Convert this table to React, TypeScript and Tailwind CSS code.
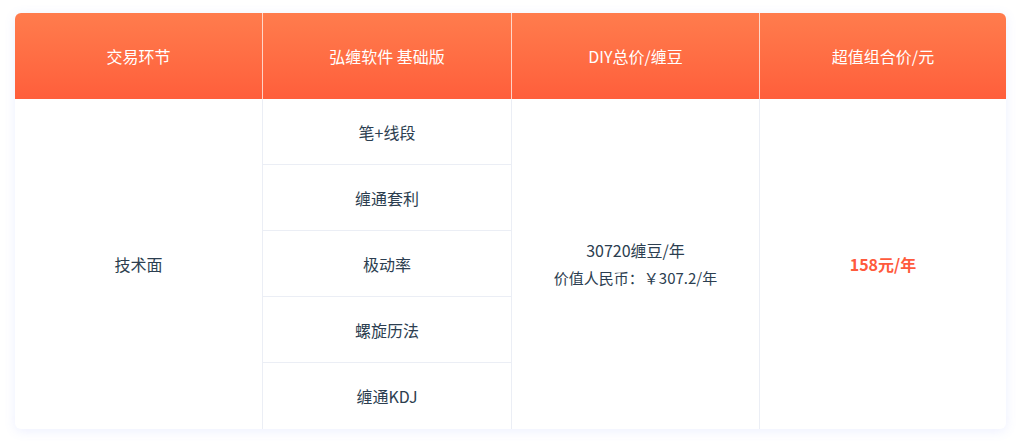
import React from "react";

const items = ["笔+线段", "缠通套利", "极动率", "螺旋历法", "缠通KDJ"];

export default function App() {
  return (
    <div
      className="w-[1022px] h-[446px] bg-white pt-[13px] pl-[15px]"
      style={{ fontFamily: '"Microsoft YaHei", "Noto Sans CJK SC", "Noto Sans", sans-serif' }}
    >
      <div className="w-[991px] rounded-[6px] overflow-hidden bg-white shadow-[0_2px_12px_rgba(100,120,255,0.12)]">
        <div className="grid grid-cols-[248px_249px_248px_246px] h-[86px] bg-gradient-to-b from-[#ff7c4d] to-[#ff5e3b] text-white text-[16px]">
          <div className="flex items-center justify-center border-r border-white/70">交易环节</div>
          <div className="flex items-center justify-center border-r border-white/70">弘缠软件 基础版</div>
          <div className="flex items-center justify-center border-r border-white/70">DIY总价/缠豆</div>
          <div className="flex items-center justify-center">超值组合价/元</div>
        </div>
        <div className="grid grid-cols-[248px_249px_248px_246px] text-[16px] text-[#2c3e50]">
          <div className="flex items-center justify-center border-r border-[#ebeef5]">技术面</div>
          <div className="flex flex-col border-r border-[#ebeef5]">
            {items.map((t, i) => (
              <div
                key={t}
                className={`h-[66px] flex items-center justify-center ${i < items.length - 1 ? "border-b border-[#ebeef5]" : ""}`}
              >
                {t}
              </div>
            ))}
          </div>
          <div className="flex flex-col items-center justify-center border-r border-[#ebeef5]">
            <div className="leading-[24px] mb-[4px]">30720缠豆/年</div>
            <div className="text-[15px] leading-[24px]">价值人民币：￥307.2/年</div>
          </div>
          <div className="flex items-center justify-center text-[#ff5a3c] font-bold">158元/年</div>
        </div>
      </div>
    </div>
  );
}
